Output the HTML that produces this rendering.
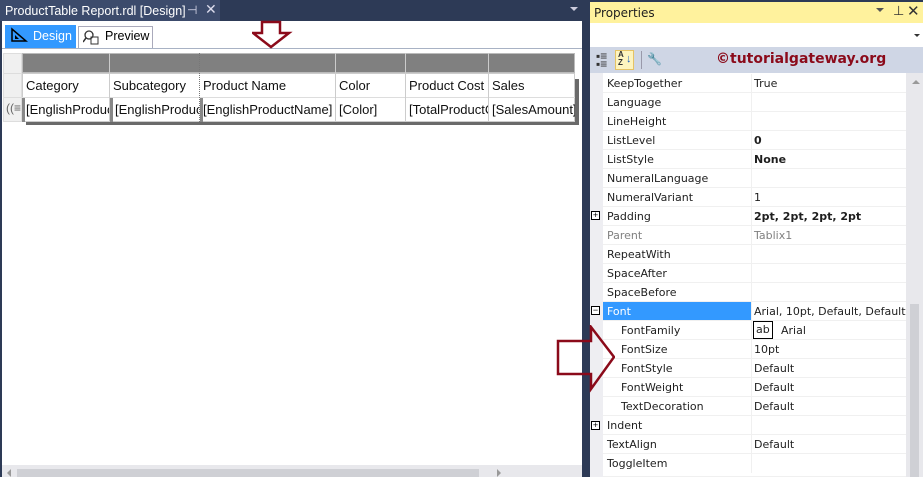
<!DOCTYPE html>
<html style="width:923px;height:477px;overflow:hidden"><head><meta charset="utf-8">
<style>
*{margin:0;padding:0;box-sizing:border-box}
body{width:923px;height:477px;overflow:hidden;background:#2d3a56;font-family:"Liberation Sans",sans-serif;position:relative;font-size:12px}
.abs{position:absolute}
#left{left:2px;top:21px;width:580px;height:456px;background:#fff}
.cell{position:absolute;font-size:13px;color:#111;white-space:nowrap;overflow:hidden;padding-left:3px;line-height:23px;height:23px}
.pr{position:absolute;left:603px;width:303px;height:19px;border-bottom:1px solid #f0f0f0;font-family:"DejaVu Sans",sans-serif;font-size:11px;color:#1e1e1e;background:#fff;overflow:hidden}
.pr .n{position:absolute;left:4px;top:3px}
.pr .v{position:absolute;left:151px;top:3px;white-space:nowrap}
.pr .sep{position:absolute;left:148px;top:0;width:1px;height:19px;background:#f0f0f0}
.box{position:absolute;left:591px;width:9px;height:9px;border:1px solid #000;font-size:9px;line-height:7px;text-align:center;background:#fff}
</style></head><body>
<div class="abs" style="left:0;top:0;width:220px;height:21px;background:#3c4b6c"></div>
<div class="abs" style="left:5px;top:4px;color:#fff;font-family:'Liberation Sans',sans-serif;font-size:12.5px">ProductTable Report.rdl [Design]</div>
<div class="abs" style="left:187px;top:3px;color:#dde;font-size:12px">⊣</div>
<div class="abs" style="left:205px;top:1px;color:#dde;font-size:14px">✕</div>
<div class="abs" style="left:570px;top:7px;width:0;height:0;border-left:4px solid transparent;border-right:4px solid transparent;border-top:4px solid #ccd"></div>
<div id="left" class="abs"></div>
<div class="abs" style="left:5px;top:25px;width:71px;height:23px;background:#3399ff"></div>
<div class="abs" style="left:10px;top:27px;width:18px;height:16px">
<svg width="18" height="16"><path d="M2 2 L2 14 L16 14 Z" fill="none" stroke="#000" stroke-width="1.5"/><path d="M5 8 L5 12 L9 12 Z" fill="#000"/></svg></div>
<div class="abs" style="left:33px;top:29px;color:#fff;font-family:'Liberation Sans',sans-serif;font-size:12.5px">Design</div>
<div class="abs" style="left:78px;top:26px;width:75px;height:23px;background:#fff;border:1px solid #aab;border-bottom:none"></div>
<div class="abs" style="left:83px;top:29px;width:16px;height:16px"><svg width="16" height="16"><circle cx="6" cy="6" r="4" fill="none" stroke="#333" stroke-width="1.3"/><path d="M3 9 L0 13" stroke="#333" stroke-width="1.5"/><rect x="8" y="8" width="7" height="7" fill="none" stroke="#333"/></svg></div>
<div class="abs" style="left:105px;top:29px;color:#000;font-family:'Liberation Sans',sans-serif;font-size:12.5px">Preview</div>
<div class="abs" style="left:2px;top:48px;width:580px;height:1px;background:#a8b2c4"></div>
<div class="abs" style="left:3px;top:53px;width:19px;height:69px;background:#f0f0f0;border:1px solid #ddd"></div>
<div class="abs" style="left:3px;top:73px;width:19px;height:1px;background:#ddd"></div>
<div class="abs" style="left:3px;top:97px;width:19px;height:1px;background:#ddd"></div>
<div class="abs" style="left:6px;top:101px;font-size:12px;color:#666">((≡</div>
<div class="abs" style="left:26px;top:79px;width:553px;height:46px;background:#6a6a6a"></div>
<div class="abs" style="left:22px;top:53px;width:553px;height:20px;background:#808080;border:1px solid #bbb"></div>
<div class="abs" style="left:22px;top:73px;width:553px;height:49px;background:#fff;border:1px solid #ccc"></div>
<div class="abs" style="left:22px;top:97px;width:553px;height:1px;background:#ddd"></div>
<div class="abs" style="left:109px;top:53px;width:1px;height:69px;background:#ccc"></div>
<div class="abs" style="left:199px;top:53px;width:1px;height:69px;border-left:1px dotted #777"></div>
<div class="abs" style="left:335px;top:53px;width:1px;height:69px;background:#ccc"></div>
<div class="abs" style="left:405px;top:53px;width:1px;height:69px;background:#ccc"></div>
<div class="abs" style="left:488px;top:53px;width:1px;height:69px;background:#ccc"></div>
<div class="abs" style="left:22px;top:98px;width:3px;height:24px;background:#888"></div>
<div class="abs" style="left:110px;top:98px;width:3px;height:24px;background:#888"></div>
<div class="abs" style="left:200px;top:98px;width:3px;height:24px;background:#888"></div>
<div class="cell" style="left:23px;top:74px;width:86px">Category</div>
<div class="cell" style="left:110px;top:74px;width:89px">Subcategory</div>
<div class="cell" style="left:200px;top:74px;width:135px">Product Name</div>
<div class="cell" style="left:336px;top:74px;width:69px">Color</div>
<div class="cell" style="left:406px;top:74px;width:82px">Product Cost</div>
<div class="cell" style="left:489px;top:74px;width:86px">Sales</div>
<div class="cell" style="left:23px;top:98px;width:86px">[EnglishProductCategoryName]</div>
<div class="cell" style="left:112px;top:98px;width:87px">[EnglishProductSubcategory]</div>
<div class="cell" style="left:200px;top:98px;width:135px">[EnglishProductName]</div>
<div class="cell" style="left:336px;top:98px;width:69px">[Color]</div>
<div class="cell" style="left:406px;top:98px;width:82px">[TotalProductCost]</div>
<div class="cell" style="left:489px;top:98px;width:86px">[SalesAmount]</div>
<svg class="abs" style="left:252px;top:20px" width="42" height="30"><path d="M10 2 L28 2 L28 13 L37 13 L19 27 L1 13 L10 13 Z" fill="none" stroke="#8b0a1a" stroke-width="2.5"/></svg>
<div class="abs" style="left:2px;top:465px;width:580px;height:12px;background:#e8e8ec"></div>
<div class="abs" style="left:17px;top:469px;width:462px;height:8px;background:#cfd0d5"></div>
<div class="abs" style="left:7px;top:469px;width:0;height:0;border-top:4px solid transparent;border-bottom:4px solid transparent;border-right:4px solid #999"></div>
<div class="abs" style="left:497px;top:469px;width:0;height:0;border-top:4px solid transparent;border-bottom:4px solid transparent;border-left:4px solid #999"></div>
<div class="abs" style="left:590px;top:2px;width:333px;height:21px;background:#fff29d"></div>
<div class="abs" style="left:594px;top:6px;font-family:'DejaVu Sans',sans-serif;font-size:12px;color:#1e1e1e">Properties</div>
<div class="abs" style="left:876px;top:8px;width:0;height:0;border-left:4px solid transparent;border-right:4px solid transparent;border-top:4px solid #555"></div>
<div class="abs" style="left:893px;top:3px;font-size:13px;color:#333">⊥</div>
<div class="abs" style="left:907px;top:2px;font-size:15px;color:#333">✕</div>
<div class="abs" style="left:590px;top:23px;width:333px;height:24px;background:#fff"></div>
<div class="abs" style="left:914px;top:34px;width:0;height:0;border-left:3px solid transparent;border-right:3px solid transparent;border-top:3px solid #333"></div>
<div class="abs" style="left:590px;top:47px;width:333px;height:26px;background:#cfd6e5"></div>
<div class="abs" style="left:596px;top:52px;font-size:12px;color:#333;line-height:8px">▪≡<br>▪≡</div>
<div class="abs" style="left:615px;top:50px;width:19px;height:20px;background:#fdf4bf;border:1px solid #e5c365"></div>
<div class="abs" style="left:618px;top:51px;font-size:8px;font-weight:bold;line-height:8px;color:#333">A<br>Z</div>
<div class="abs" style="left:626px;top:53px;font-size:11px;color:#1e5fbf;font-weight:bold">↓</div>
<div class="abs" style="left:641px;top:51px;width:1px;height:18px;background:#99a"></div>
<div class="abs" style="left:647px;top:52px;font-size:12px;color:#999">🔧</div>
<div class="abs" style="left:716px;top:51px;font-family:'DejaVu Sans',sans-serif;font-weight:bold;font-size:14px;color:#8b0a1a">©tutorialgateway.org</div>
<div class="abs" style="left:590px;top:73px;width:13px;height:404px;background:#eeeef2"></div>
<div class="abs" style="left:603px;top:73px;width:303px;height:404px;background:#fff"></div>
<div class="abs" style="left:906px;top:73px;width:17px;height:404px;background:#e8e8ec"></div>
<div class="abs" style="left:912px;top:80px;width:0;height:0;border-left:4px solid transparent;border-right:4px solid transparent;border-bottom:4px solid #999"></div>
<div class="abs" style="left:910px;top:304px;width:9px;height:173px;background:#cfd0d5"></div>

<div class="pr" style="top:74px"><span class="n">KeepTogether</span><i class="sep"></i><span class="v">True</span></div>
<div class="pr" style="top:93px"><span class="n">Language</span><i class="sep"></i></div>
<div class="pr" style="top:112px"><span class="n">LineHeight</span><i class="sep"></i></div>
<div class="pr" style="top:131px"><span class="n">ListLevel</span><i class="sep"></i><span class="v"><b>0</b></span></div>
<div class="pr" style="top:150px"><span class="n">ListStyle</span><i class="sep"></i><span class="v"><b>None</b></span></div>
<div class="pr" style="top:169px"><span class="n">NumeralLanguage</span><i class="sep"></i></div>
<div class="pr" style="top:188px"><span class="n">NumeralVariant</span><i class="sep"></i><span class="v">1</span></div>
<div class="pr" style="top:207px"><span class="n">Padding</span><i class="sep"></i><span class="v"><b>2pt, 2pt, 2pt, 2pt</b></span></div>
<div class="box" style="top:211px">+</div>
<div class="pr" style="top:226px;color:#808080"><span class="n">Parent</span><i class="sep"></i><span class="v">Tablix1</span></div>
<div class="pr" style="top:245px"><span class="n">RepeatWith</span><i class="sep"></i></div>
<div class="pr" style="top:264px"><span class="n">SpaceAfter</span><i class="sep"></i></div>
<div class="pr" style="top:283px"><span class="n">SpaceBefore</span><i class="sep"></i></div>
<div class="pr" style="top:302px"><span class="n" style="left:0;top:0;width:148px;height:19px;background:#3399ff;color:#fff;padding:3px 4px">Font</span><i class="sep"></i><span class="v">Arial, 10pt, Default, Default, Default</span></div>
<div class="box" style="top:306px">−</div>
<div class="pr" style="top:321px"><span class="n" style="left:18px">FontFamily</span><i class="sep"></i><span class="v" style="left:150px;top:0;border:1px solid #000;padding:1px 2px;height:18px">ab</span><span class="v" style="left:178px">Arial</span></div>
<div class="pr" style="top:340px"><span class="n" style="left:18px">FontSize</span><i class="sep"></i><span class="v">10pt</span></div>
<div class="pr" style="top:359px"><span class="n" style="left:18px">FontStyle</span><i class="sep"></i><span class="v">Default</span></div>
<div class="pr" style="top:378px"><span class="n" style="left:18px">FontWeight</span><i class="sep"></i><span class="v">Default</span></div>
<div class="pr" style="top:397px"><span class="n" style="left:18px">TextDecoration</span><i class="sep"></i><span class="v">Default</span></div>
<div class="pr" style="top:416px"><span class="n">Indent</span><i class="sep"></i></div>
<div class="box" style="top:421px">+</div>
<div class="pr" style="top:435px"><span class="n">TextAlign</span><i class="sep"></i><span class="v">Default</span></div>
<div class="pr" style="top:454px;height:23px"><span class="n">ToggleItem</span><i class="sep"></i></div>
<svg class="abs" style="left:555px;top:325px" width="60" height="68"><path d="M3 16 L36 16 L36 2 L59 32 L36 64 L36 49 L3 49 Z" fill="none" stroke="#8b0a1a" stroke-width="2.5"/></svg>
</body></html>
